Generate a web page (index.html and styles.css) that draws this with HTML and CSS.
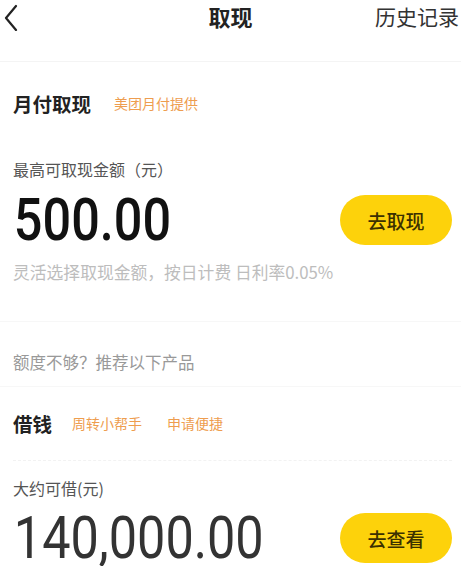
FILE: index.html
```html
<!DOCTYPE html>
<html lang="zh-CN">
<head>
<meta charset="utf-8">
<title>取现</title>
<link rel="stylesheet" href="styles.css">
</head>
<body>
<header class="nav">
  <div class="nav-back">
    <svg width="16" height="28" viewBox="0 0 16 28" aria-hidden="true"><path d="M13 3 L3 15 L13 27" fill="none" stroke="#222" stroke-width="2.2" stroke-linecap="round" stroke-linejoin="round"/></svg>
  </div>
  <div class="nav-title">取现</div>
  <div class="nav-right">历史记录</div>
</header>

<section class="card first">
  <div class="title-row">
    <span class="title">月付取现</span>
    <span class="tag">美团月付提供</span>
  </div>
  <div class="label">最高可取现金额（元）</div>
  <div class="amount-row">
    <span class="amount dark">500.00</span>
    <button class="btn">去取现</button>
  </div>
  <div class="sub">灵活选择取现金额，按日计费 日利率0.05%</div>
</section>

<div class="hint">额度不够？推荐以下产品</div>

<section class="card second">
  <div class="title-row">
    <span class="title">借钱</span>
    <span class="tag">周转小帮手</span>
    <span class="tag">申请便捷</span>
  </div>
  <div class="label label2">大约可借(元)</div>
  <div class="amount-row">
    <span class="amount gray">140,000.00</span>
    <button class="btn">去查看</button>
  </div>
</section>
</body>
</html>
```

FILE: styles.css
```css
html, body {
  margin: 0;
  padding: 0;
  background: #ffffff;
}
body {
  font-family: "Noto Sans CJK SC", "Noto Sans", sans-serif;
  color: #222;
  overflow: hidden;
}
.nav {
  display: grid;
  grid-template-columns: 1fr auto 1fr;
  align-items: center;
  height: 33px;
  padding-bottom: 28px;
  border-bottom: 1px solid #f4f4f4;
}
.nav-back {
  padding-left: 3px;
  display: flex;
  align-items: center;
  height: 33px;
}
.nav-title {
  font-size: 22px;
  font-weight: 700;
  color: #222;
  line-height: 33px;
}
.nav-right {
  justify-self: end;
  font-size: 21px;
  color: #333;
  line-height: 33px;
  padding-right: 2px;
  white-space: nowrap;
}
.card {
  padding-left: 13px;
  padding-right: 9px;
}
.first {
  padding-top: 26px;
}
.title-row {
  display: flex;
  align-items: center;
  height: 30px;
  gap: 24px;
}
.title {
  font-size: 19.5px;
  font-weight: 700;
  color: #222;
  margin-right: -1px;
}
.tag {
  font-size: 14px;
  color: #ee9d4f;
}
.second .title-row .tag + .tag {
  margin-left: 1px;
}
.label {
  margin-top: 39px;
  height: 24px;
  line-height: 24px;
  font-size: 16px;
  color: #555;
}
.amount-row {
  margin-top: 11px;
  height: 56px;
  display: flex;
  align-items: center;
  justify-content: space-between;
}
.amount {
  display: inline-block;
  font-family: "Roboto", "Liberation Sans", sans-serif;
  font-size: 60px;
  line-height: 56px;
  padding-left: 1px;
  transform: scaleX(0.84);
  transform-origin: left center;
  white-space: nowrap;
}
.dark {
  color: #111;
  font-weight: 500;
}
.gray {
  color: #333;
  font-weight: 400;
}
.btn {
  flex: none;
  width: 112px;
  height: 50px;
  border: none;
  border-radius: 25px;
  background: #fdd20b;
  color: #3b3000;
  font-family: "Noto Sans CJK SC", sans-serif;
  font-size: 19px;
  font-weight: 500;
  padding: 0;
}
.sub {
  margin-top: 13px;
  height: 22px;
  line-height: 22px;
  font-size: 16.8px;
  color: #bdbdbd;
  white-space: nowrap;
}
.hint {
  margin-top: 38px;
  padding: 28px 13px 12px;
  border-top: 1px solid #f7f7f7;
  border-bottom: 1px solid #f7f7f7;
  height: 24px;
  line-height: 24px;
  font-size: 16.5px;
  color: #999;
}
.second {
  padding-top: 21px;
}
.second .title {
  margin-right: -4px;
}
.label2 {
  margin-top: 22px;
  border-top: 1px dashed #f2f2f2;
  padding-top: 15px;
}
.second .amount-row {
  margin-top: 10px;
}
```
